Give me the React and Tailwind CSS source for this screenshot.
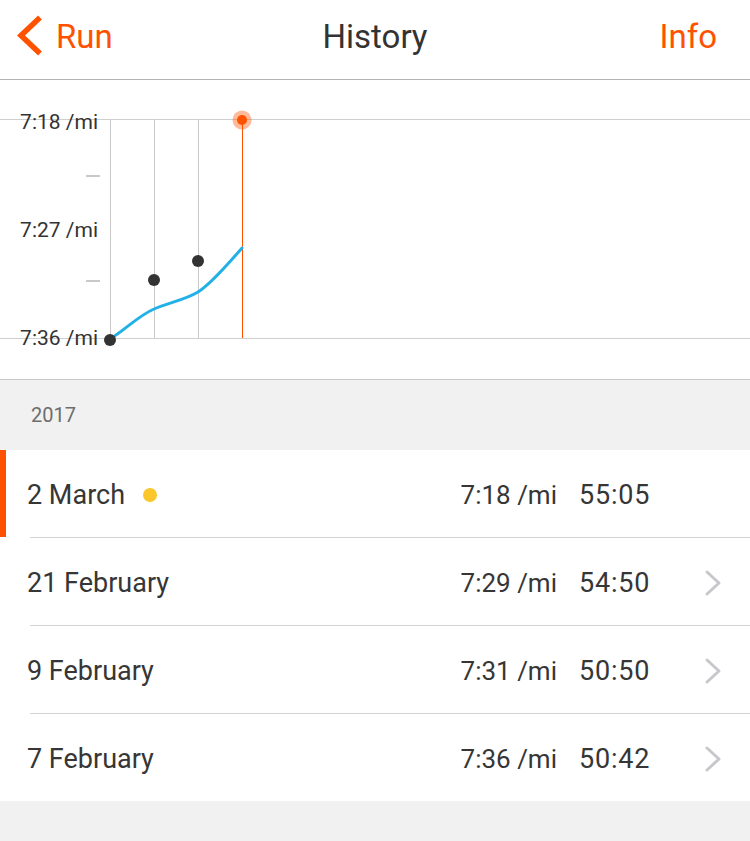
import React from "react";

const ORANGE = "#ff5200";

const runs = [
  { date: "2 March", pace: "7:18 /mi", time: "55:05", current: true },
  { date: "21 February", pace: "7:29 /mi", time: "54:50" },
  { date: "9 February", pace: "7:31 /mi", time: "50:50" },
  { date: "7 February", pace: "7:36 /mi", time: "50:42" },
];

function PaceChart() {
  return (
    <svg width="750" height="299" viewBox="0 0 750 299" className="block">
      {/* grid */}
      <line x1="0" y1="39.5" x2="750" y2="39.5" stroke="#cfcfcf" strokeWidth="1" />
      <line x1="0" y1="258.5" x2="750" y2="258.5" stroke="#cfcfcf" strokeWidth="1" />
      {[110, 154, 198].map((x) => (
        <line key={x} x1={x + 0.5} y1="39" x2={x + 0.5} y2="258" stroke="#c9c9c9" strokeWidth="1" />
      ))}
      <line x1="242.5" y1="40" x2="242.5" y2="258" stroke={ORANGE} strokeWidth="1" />
      <line x1="86" y1="96" x2="100" y2="96" stroke="#c9c9c9" strokeWidth="2" />
      <line x1="86" y1="201" x2="100" y2="201" stroke="#c9c9c9" strokeWidth="2" />

      {/* labels */}
      <g fontFamily="Roboto, sans-serif" fontSize="21" fill="#333333" textAnchor="end">
        <text x="98" y="49">7:18 /mi</text>
        <text x="98" y="157">7:27 /mi</text>
        <text x="98" y="265">7:36 /mi</text>
      </g>

      {/* trend */}
      <path
        d="M110 259 C 125 250, 138 236, 154 229 S 185 220, 198 212 S 228 184, 242 168"
        fill="none"
        stroke="#22b1e6"
        strokeWidth="3"
        strokeLinecap="round"
      />

      {/* points */}
      <circle cx="110" cy="260" r="6" fill="#333333" />
      <circle cx="154" cy="200" r="6" fill="#333333" />
      <circle cx="198" cy="181" r="6" fill="#333333" />
      <circle cx="242" cy="40" r="9.5" fill={ORANGE} fillOpacity="0.4" />
      <circle cx="242" cy="40" r="5" fill={ORANGE} />
    </svg>
  );
}

function Chevron() {
  return (
    <svg width="18" height="28" viewBox="0 0 18 28">
      <path d="M3 3 L15 14 L3 25" fill="none" stroke="#c7c7cc" strokeWidth="3" strokeLinecap="round" strokeLinejoin="round" />
    </svg>
  );
}

export default function App() {
  return (
    <div className="min-h-screen w-[750px] bg-[#f1f1f1] font-['Roboto',sans-serif] text-[#333333]">
      {/* Nav bar */}
      <div className="relative flex h-[80px] items-center justify-between border-b border-[#b4b4b4] bg-white pb-[7px] pl-[17px] pr-[33px]">
        <div className="flex items-center gap-[13px]" style={{ color: ORANGE }}>
          <svg width="26" height="42" viewBox="0 0 26 42">
            <path d="M23 2.5 L4 20.5 L23 38.5" fill="none" stroke={ORANGE} strokeWidth="5.5" strokeLinejoin="miter" />
          </svg>
          <span className="text-[33px] leading-none">Run</span>
        </div>
        <span className="absolute left-1/2 -translate-x-1/2 text-[33px] leading-none text-[#333333]">
          History
        </span>
        <span className="text-[33px] leading-none" style={{ color: ORANGE }}>
          Info
        </span>
      </div>

      {/* Chart */}
      <div className="border-b border-[#c8c8c8] bg-white">
        <PaceChart />
      </div>

      {/* Section header */}
      <div className="flex h-[70px] items-center pl-[31px] text-[20px] text-[#6d6d6d]">2017</div>

      {/* Rows */}
      <div className="bg-white">
        {runs.map((r, i) => (
          <div key={r.date}>
            {i > 0 && <div className="ml-[30px] h-px bg-[#d4d4d4]" />}
            <div className="relative flex h-[87px] items-center pl-[27px] pt-[3px] text-[27px] text-[#363636]">
              {r.current && <div className="absolute left-0 top-0 h-full w-[6px]" style={{ backgroundColor: ORANGE }} />}
              <div className="flex flex-1 items-center">
                <span>{r.date}</span>
                {r.current && <span className="ml-[18px] h-[14px] w-[14px] rounded-full bg-[#fcc62d]" />}
              </div>
              <span className="text-right text-[26px]">{r.pace}</span>
              <span className="ml-[22px] w-[70px] text-right tracking-[0.8px]">{r.time}</span>
              <div className="flex w-[101px] justify-end pr-[28px]">
                {!r.current && <Chevron />}
              </div>
            </div>
          </div>
        ))}
      </div>
    </div>
  );
}
